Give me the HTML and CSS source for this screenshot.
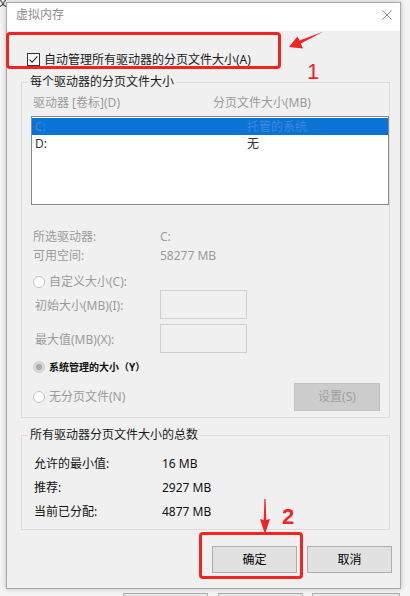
FILE: index.html
```html
<!DOCTYPE html>
<html lang="zh-CN">
<head>
<meta charset="utf-8">
<title>虚拟内存</title>
<link rel="stylesheet" href="styles.css">
</head>
<body>
<div class="screen">
  <div class="toprow">
    <div class="gutter"><span class="frag">校</span></div>
    <div class="dialog">
      <div class="titlebar">
        <span class="title">虚拟内存</span>
        <svg class="close" width="10" height="10" viewBox="0 0 10 10"><path d="M0.5 0.5 L9.5 9.5 M9.5 0.5 L0.5 9.5" stroke="#8c8c8c" stroke-width="1" fill="none"/></svg>
      </div>
      <div class="content">
        <div class="check-row">
          <svg class="checkbox" width="13" height="13" viewBox="0 0 13 13"><rect x="0.5" y="0.5" width="12" height="12" fill="#fff" stroke="#333"/><path d="M2.6 6.6 L5.1 9.1 L10.4 3.4" stroke="#333" stroke-width="1.2" fill="none"/></svg>
          <span>自动管理所有驱动器的分页文件大小(A)</span>
        </div>

        <fieldset class="group group-drives">
          <legend>每个驱动器的分页文件大小</legend>
          <div class="cols dis"><span class="hcol1">驱动器 [卷标](D)</span><span>分页文件大小(MB)</span></div>
          <div class="listbox">
            <div class="lrow sel"><span class="lcol1">C:</span><span>托管的系统</span></div>
            <div class="lrow"><span class="lcol1">D:</span><span>无</span></div>
          </div>
          <div class="info dis">
            <div class="irow"><span class="ilab">所选驱动器:</span><span>C:</span></div>
            <div class="irow"><span class="ilab">可用空间:</span><span>58277 MB</span></div>
          </div>
          <div class="radio-row r-custom dis"><span class="radio"></span><span>自定义大小(C):</span></div>
          <div class="input-row dis"><span class="inlab">初始大小(MB)(I):</span><span class="textbox"></span></div>
          <div class="input-row second dis"><span class="inlab">最大值(MB)(X):</span><span class="textbox"></span></div>
          <div class="radio-row r-system"><span class="radio on"></span><span class="systxt">系统管理的大小（Y）</span></div>
          <div class="radio-row r-none">
            <span class="rlabel dis"><span class="radio"></span><span>无分页文件(N)</span></span>
            <span class="btn btn-set">设置(S)</span>
          </div>
        </fieldset>

        <fieldset class="group group-total">
          <legend>所有驱动器分页文件大小的总数</legend>
          <div class="trow"><span class="tlab">允许的最小值:</span><span class="tval">16 MB</span></div>
          <div class="trow"><span class="tlab">推荐:</span><span class="tval">2927 MB</span></div>
          <div class="trow"><span class="tlab">当前已分配:</span><span class="tval">4877 MB</span></div>
        </fieldset>

        <div class="buttons">
          <span class="btn">确定</span>
          <span class="btn">取消</span>
        </div>
      </div>
    </div>
  </div>
  <div class="bottomrow">
    <span class="bgbtn"></span><span class="bgbtn b2"></span><span class="bgbtn b3"></span>
  </div>
</div>

<div class="annot rbox rbox1"></div>
<svg class="annot arrow1" width="40" height="22" viewBox="0 0 40 22"><polygon points="3,18 11.4,7.4 13.6,11.6 37.5,2.5 14.8,14.6 17,19.6" fill="#f3241f"/></svg>
<span class="annot digit d1">1</span>
<svg class="annot arrow2" width="12" height="36" viewBox="0 0 12 36"><polygon points="5.4,0 6.6,0 7.3,21 11,20 6,35 1,20 4.7,21" fill="#f3241f"/></svg>
<span class="annot digit d2">2</span>
<div class="annot rbox rbox2"></div>
</body>
</html>
```

FILE: styles.css
```css
* { box-sizing: border-box; }

body {
  margin: 0;
  width: 410px;
  height: 596px;
  overflow: hidden;
  position: relative;
  background: #f4f4f4;
  font-family: "Noto Sans", "Noto Sans CJK SC", sans-serif;
  font-size: 12px;
  color: #1a1a1a;
}

.screen { display: flex; flex-direction: column; }
.toprow { display: flex; }

.gutter {
  width: 6px;
  overflow: hidden;
  height: 20px;
}
.frag {
  display: block;
  margin-left: -5px;
  margin-top: -4px;
  font-size: 12px;
  line-height: 12px;
  color: #333;
}

.dialog {
  margin-top: 2px;
  width: 395px;
  border: 1px solid #a9a9a9;
  background: #f0f0f0;
  box-shadow: 0 0 5px rgba(0, 0, 0, 0.22);
}

.titlebar {
  height: 28px;
  background: #fff;
  display: flex;
  align-items: flex-start;
  justify-content: space-between;
  padding: 0 8px 0 9px;
}
.title {
  margin-top: 4px;
  line-height: 16px;
  color: #8c8c8c;
}
.close { margin-top: 7px; }

.content { padding: 20px 8px 15px 14px; }

.check-row {
  display: flex;
  align-items: center;
  height: 16px;
  padding-left: 6px;
}
.checkbox { margin-right: 4px; flex: none; }

.group {
  margin: 0 2px 0 0;
  padding: 5px 0 6px 9px;
  border: 1px solid #dcdcdc;
  min-width: 0;
}
.group legend {
  padding: 0 2px;
  margin-left: -3px;
  line-height: 16px;
  color: #1a1a1a;
}
.group-drives { margin-top: 7px; }

.dis { color: #9b9b9b; }

.cols {
  display: flex;
  line-height: 16px;
  padding-left: 2px;
}
.hcol1 { width: 180px; }

.listbox {
  margin-top: 5px;
  height: 89px;
  border: 1px solid #8a8a8a;
  background: #fff;
  padding: 1px 0;
}
.lrow {
  display: flex;
  line-height: 17px;
  padding-left: 3px;
  color: #333;
}
.lcol1 { width: 212px; }
.lrow.sel {
  background: #0b73d4;
  color: #3d8ad8;
}

.info { margin-top: 22px; }
.irow {
  display: flex;
  line-height: 19px;
  padding-left: 2px;
}
.ilab { width: 127px; }

.radio-row {
  display: flex;
  align-items: center;
  line-height: 16px;
  padding-left: 2px;
}
.radio {
  width: 12px;
  height: 12px;
  border-radius: 50%;
  border: 1px solid #c4c4c4;
  background: #fff;
  margin-right: 4px;
  flex: none;
  display: flex;
  align-items: center;
  justify-content: center;
}
.radio.on {
  background: #dadada;
  border-color: #cfcfcf;
}
.radio.on::after {
  content: "";
  width: 6px;
  height: 6px;
  border-radius: 50%;
  background: #a9a9a9;
}
.r-custom { margin-top: 9px; }
.r-system { margin-top: 6px; }
.systxt {
  font-size: 10px;
  font-weight: 700;
  color: #111;
}
.r-none {
  margin-top: 8px;
  height: 28px;
  justify-content: space-between;
  padding-right: 9px;
}
.rlabel { display: flex; align-items: center; }

.input-row {
  display: flex;
  align-items: center;
  padding-left: 4px;
}
.input-row.second { margin-top: 5px; }
.inlab { width: 125px; }
.textbox {
  width: 87px;
  height: 29px;
  border: 1px solid #d0d0d0;
  background: #f0f0f0;
}

.btn {
  display: flex;
  align-items: center;
  justify-content: center;
  width: 85px;
  height: 27px;
  background: #e1e1e1;
  border: 1px solid #adadad;
  color: #000;
  line-height: 16px;
}
.btn-set {
  width: 86px;
  height: 28px;
  background: #cccccc;
  border-color: #c2c2c2;
  color: #9e9e9e;
}

.group-total {
  margin-top: 9px;
  padding: 9px 0 5px 9px;
}
.trow {
  display: flex;
  line-height: 24px;
  padding-left: 3px;
  color: #111;
}
.tlab { width: 128px; }

.buttons {
  display: flex;
  justify-content: flex-end;
  gap: 10px;
  margin-top: 16px;
}

.bottomrow {
  display: flex;
  margin-top: 4px;
  padding-left: 123px;
}
.bgbtn {
  width: 85px;
  height: 12px;
  border: 1px solid #adadad;
  background: #e6e6e6;
}
.bgbtn.b2 { margin-left: 10px; }
.bgbtn.b3 { margin-left: 9px; width: 88px; }

/* annotations overlaid on the screenshot */
.annot { position: absolute; }
.rbox {
  border: 3px solid #f3241f;
  border-radius: 4px;
}
.rbox1 { left: 6px; top: 32px; width: 275px; height: 37px; }
.rbox2 { left: 199px; top: 532px; width: 104px; height: 47px; }
.arrow1 { left: 286px; top: 29px; }
.arrow2 { left: 259px; top: 499px; }
.digit {
  font-family: "Liberation Sans", sans-serif;
  font-size: 22px;
  line-height: 22px;
  color: #f3241f;
}
.d1 { left: 307px; top: 61px; }
.d2 { left: 282px; top: 506px; font-weight: 700; }
```
